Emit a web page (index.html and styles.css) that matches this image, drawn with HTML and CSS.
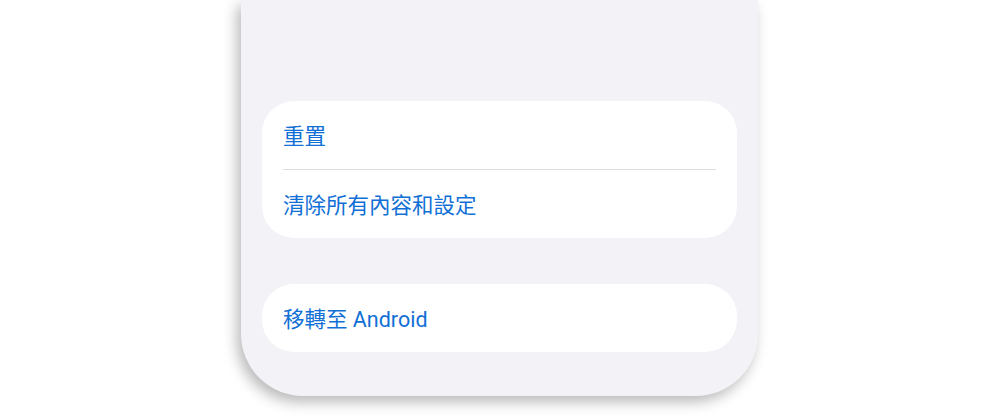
FILE: index.html
```html
<!DOCTYPE html>
<html lang="zh-Hant">
<head>
<meta charset="utf-8">
<link rel="stylesheet" href="styles.css">
</head>
<body>
<div class="phone">
  <div class="group first">
    <div class="row"><span class="label">重置</span></div>
    <div class="divider"></div>
    <div class="row"><span class="label">清除所有內容和設定</span></div>
  </div>
  <div class="group">
    <div class="row"><span class="label">移轉至 Android</span></div>
  </div>
</div>
</body>
</html>
```
FILE: styles.css
```css
html, body {
  margin: 0;
  padding: 0;
  background: #ffffff;
  width: 999px;
  height: 419px;
  overflow: hidden;
}
.phone {
  box-sizing: border-box;
  margin-left: 241px;
  width: 517px;
  height: 396px;
  background: #f2f2f7;
  border-radius: 0 0 62px 62px;
  box-shadow: -4px 6px 14px rgba(0, 0, 0, 0.28);
  padding: 101px 21px 0;
  display: flex;
  flex-direction: column;
  gap: 46px;
}
.group {
  background: #ffffff;
  border-radius: 32px;
  display: flex;
  flex-direction: column;
}
.row {
  box-sizing: border-box;
  height: 68px;
  display: flex;
  align-items: center;
  padding: 4px 21px 0;
}
.label {
  font-family: Roboto, "Noto Sans CJK TC", sans-serif;
  font-size: 21.5px;
  color: #1170d6;
  line-height: 1;
}
.divider {
  height: 1px;
  background: #dcdce0;
  margin: 0 21px;
}
```
